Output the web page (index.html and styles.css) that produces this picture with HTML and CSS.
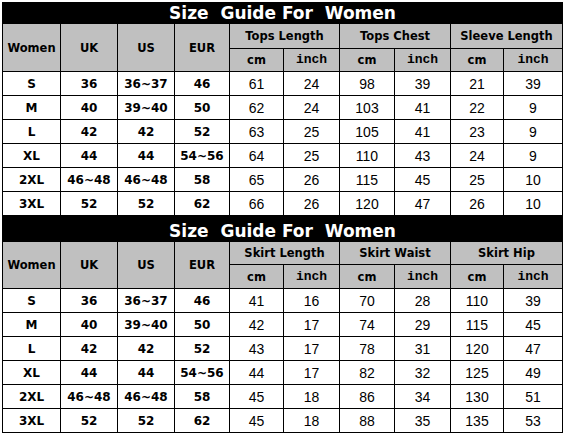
FILE: index.html
```html
<!DOCTYPE html>
<html>
<head>
<meta charset="utf-8">
<link rel="stylesheet" href="styles.css">
</head>
<body>
<div class="page">
<table class="guide g1">
  <colgroup>
    <col class="c58"><col class="c57"><col class="c57"><col class="c55"><col class="c54"><col class="c56"><col class="c55"><col class="c56"><col class="c53"><col class="c59">
  </colgroup>
  <tr class="title"><td colspan="10">Size  Guide For  Women</td></tr>
  <tr class="h1">
    <td rowspan="2" class="hd">Women</td>
    <td rowspan="2" class="hd">UK</td>
    <td rowspan="2" class="hd">US</td>
    <td rowspan="2" class="hd">EUR</td>
    <td colspan="2" class="hd">Tops Length</td>
    <td colspan="2" class="hd">Tops Chest</td>
    <td colspan="2" class="hd">Sleeve Length</td>
  </tr>
  <tr class="h2">
    <td class="hd">cm</td><td class="hd mono">inch</td>
    <td class="hd">cm</td><td class="hd mono">inch</td>
    <td class="hd">cm</td><td class="hd mono">inch</td>
  </tr>
  <tr class="row"><td class="b">S</td><td class="b">36</td><td class="b">36~37</td><td class="b">46</td><td>61</td><td>24</td><td>98</td><td>39</td><td>21</td><td>39</td></tr>
  <tr class="row"><td class="b">M</td><td class="b">40</td><td class="b">39~40</td><td class="b">50</td><td>62</td><td>24</td><td>103</td><td>41</td><td>22</td><td>9</td></tr>
  <tr class="row"><td class="b">L</td><td class="b">42</td><td class="b">42</td><td class="b">52</td><td>63</td><td>25</td><td>105</td><td>41</td><td>23</td><td>9</td></tr>
  <tr class="row"><td class="b">XL</td><td class="b">44</td><td class="b">44</td><td class="b">54~56</td><td>64</td><td>25</td><td>110</td><td>43</td><td>24</td><td>9</td></tr>
  <tr class="row"><td class="b">2XL</td><td class="b">46~48</td><td class="b">46~48</td><td class="b">58</td><td>65</td><td>26</td><td>115</td><td>45</td><td>25</td><td>10</td></tr>
  <tr class="row"><td class="b">3XL</td><td class="b">52</td><td class="b">52</td><td class="b">62</td><td>66</td><td>26</td><td>120</td><td>47</td><td>26</td><td>10</td></tr>
</table>
<table class="guide g2">
  <colgroup>
    <col class="c58"><col class="c57"><col class="c57"><col class="c55"><col class="c54"><col class="c56"><col class="c55"><col class="c56"><col class="c53"><col class="c59">
  </colgroup>
  <tr class="title t2"><td colspan="10">Size  Guide For  Women</td></tr>
  <tr class="h1 h1b">
    <td rowspan="2" class="hd">Women</td>
    <td rowspan="2" class="hd">UK</td>
    <td rowspan="2" class="hd">US</td>
    <td rowspan="2" class="hd">EUR</td>
    <td colspan="2" class="hd">Skirt Length</td>
    <td colspan="2" class="hd">Skirt Waist</td>
    <td colspan="2" class="hd">Skirt Hip</td>
  </tr>
  <tr class="h2 h2b">
    <td class="hd">cm</td><td class="hd mono">inch</td>
    <td class="hd">cm</td><td class="hd mono">inch</td>
    <td class="hd">cm</td><td class="hd mono">inch</td>
  </tr>
  <tr class="row"><td class="b">S</td><td class="b">36</td><td class="b">36~37</td><td class="b">46</td><td>41</td><td>16</td><td>70</td><td>28</td><td>110</td><td>39</td></tr>
  <tr class="row"><td class="b">M</td><td class="b">40</td><td class="b">39~40</td><td class="b">50</td><td>42</td><td>17</td><td>74</td><td>29</td><td>115</td><td>45</td></tr>
  <tr class="row"><td class="b">L</td><td class="b">42</td><td class="b">42</td><td class="b">52</td><td>43</td><td>17</td><td>78</td><td>31</td><td>120</td><td>47</td></tr>
  <tr class="row"><td class="b">XL</td><td class="b">44</td><td class="b">44</td><td class="b">54~56</td><td>44</td><td>17</td><td>82</td><td>32</td><td>125</td><td>49</td></tr>
  <tr class="row"><td class="b">2XL</td><td class="b">46~48</td><td class="b">46~48</td><td class="b">58</td><td>45</td><td>18</td><td>86</td><td>34</td><td>130</td><td>51</td></tr>
  <tr class="row"><td class="b">3XL</td><td class="b">52</td><td class="b">52</td><td class="b">62</td><td>45</td><td>18</td><td>88</td><td>35</td><td>135</td><td>53</td></tr>
</table>
</div>
</body>
</html>
```

FILE: styles.css
```css
html, body {
  margin: 0;
  padding: 0;
  background: #fff;
}
.page {
  padding: 2px 0 0 2px;
}
.guide {
  border-collapse: collapse;
  table-layout: fixed;
  width: 561px;
  font-family: "Liberation Sans", Arial, sans-serif;
  color: #000;
}
.guide td {
  border: 1px solid #000;
  padding: 0;
  text-align: center;
  vertical-align: middle;
  font-size: 14px;
  line-height: 16px;
  white-space: nowrap;
}
.c58 { width: 58px; }
.c57 { width: 57px; }
.c55 { width: 55px; }
.c54 { width: 54px; }
.c56 { width: 56px; }
.c53 { width: 53px; }
.c59 { width: 59px; }

.guide .title td {
  background: #000;
  color: #fff;
  font-family: "DejaVu Sans", sans-serif;
  font-weight: bold;
  font-size: 17px;
  line-height: 20px;
  height: 20px;
  white-space: pre;
}
.guide .title.t2 td {
  height: 21px;
  padding-top: 3px;
}
.guide .h1 td { height: 24px; }
.guide .h2 td { height: 22px; }
.guide .h1b td { height: 22px; }
.guide .h2b td { height: 23px; }
.guide td.hd {
  background: #c0c0c0;
  font-family: "DejaVu Sans", sans-serif;
  font-weight: bold;
  font-size: 11.5px;
  line-height: 14px;
}
.guide td.hd.mono {
  font-family: "Liberation Mono", "Courier New", monospace;
  font-size: 13px;
}
.guide .row td { height: 23px; }
.guide .row td.b {
  font-family: "DejaVu Sans", sans-serif;
  font-weight: bold;
  font-size: 12px;
}
```
